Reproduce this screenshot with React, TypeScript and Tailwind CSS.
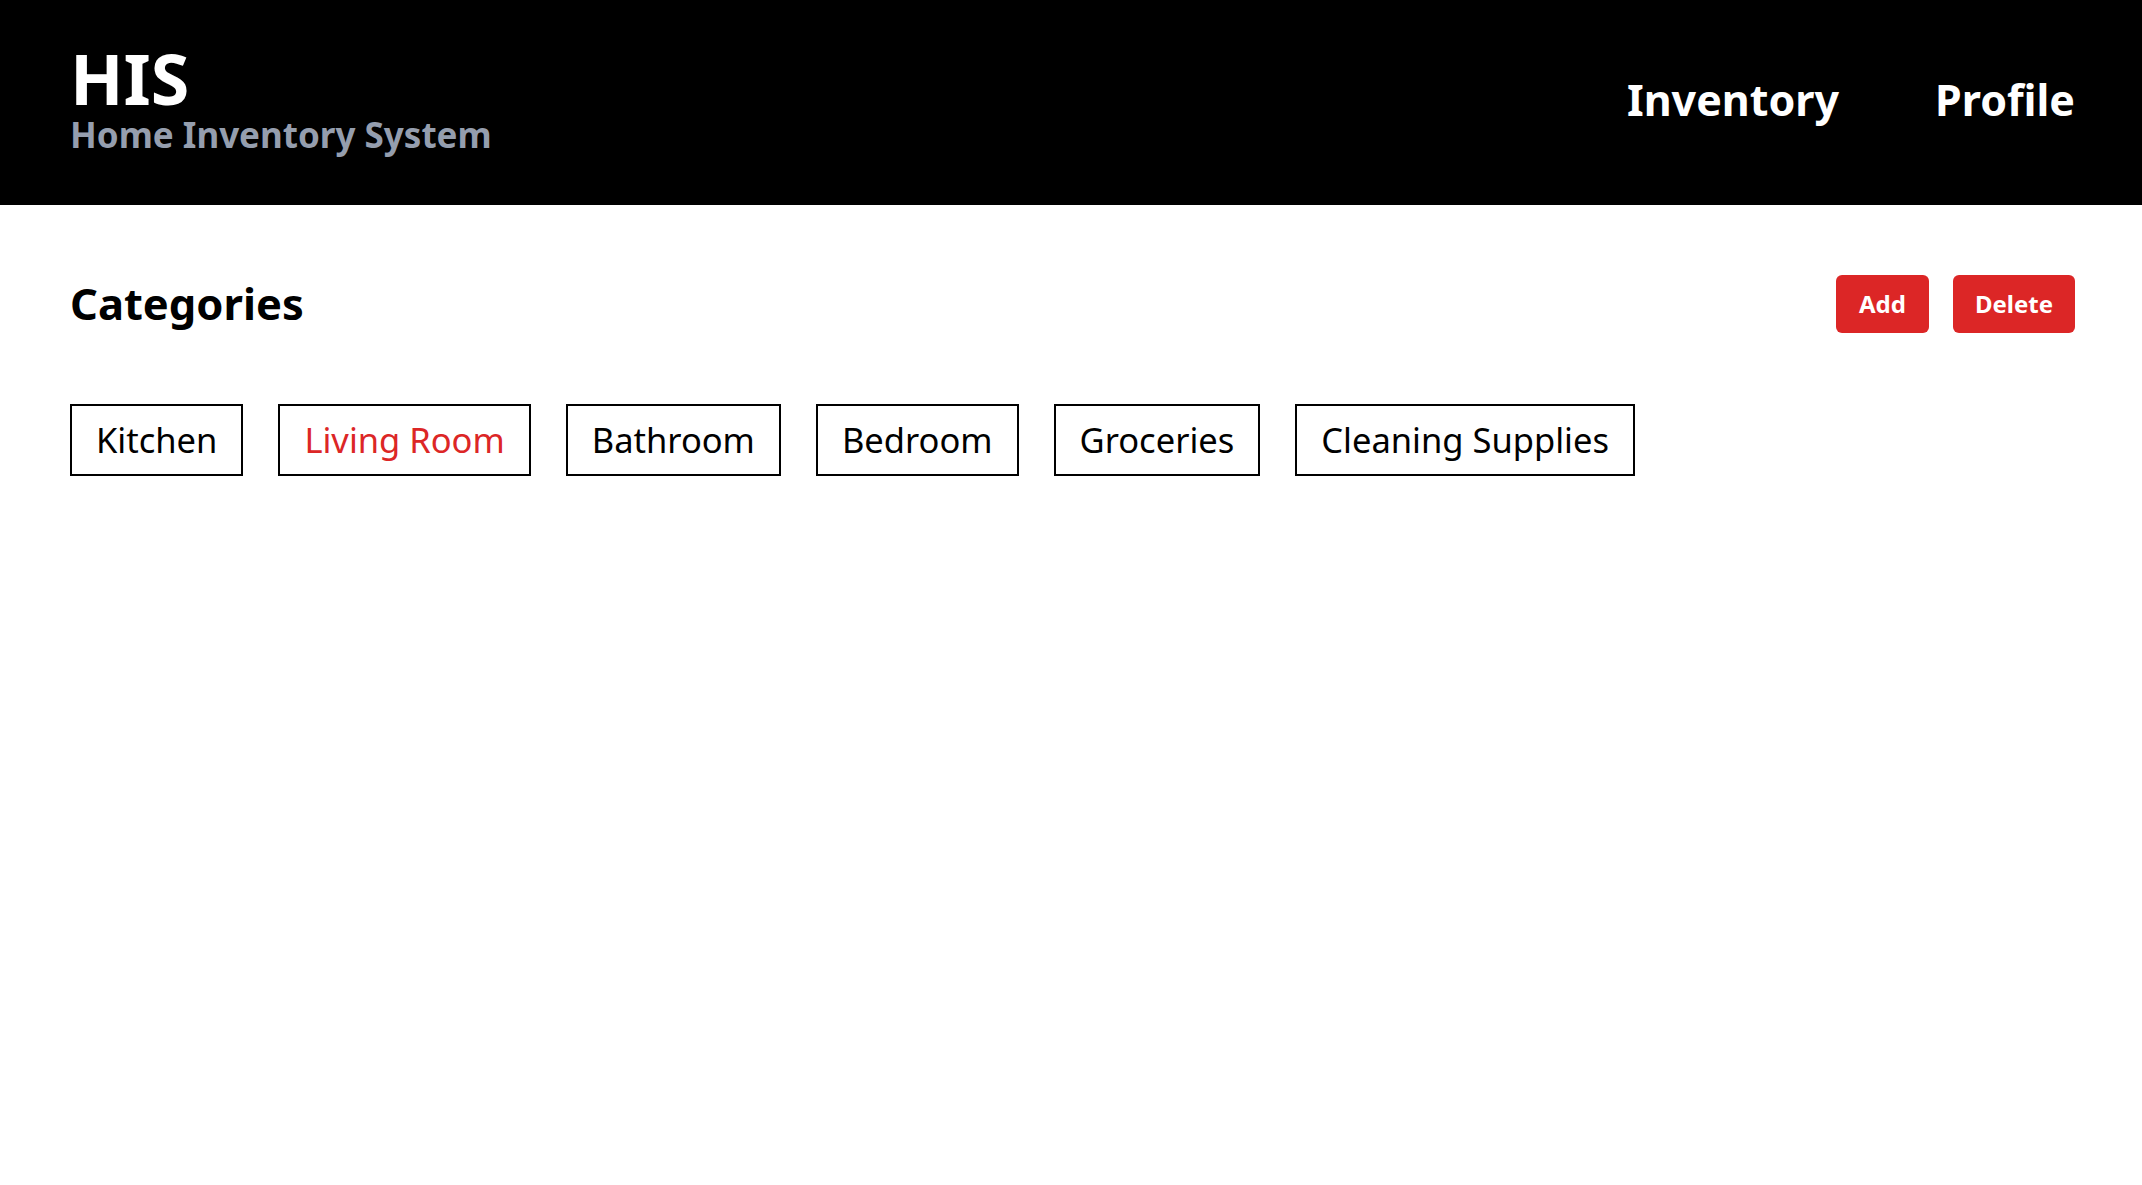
import React from "react";

const categories = [
  { name: "Kitchen", active: false },
  { name: "Living Room", active: true },
  { name: "Bathroom", active: false },
  { name: "Bedroom", active: false },
  { name: "Groceries", active: false },
  { name: "Cleaning Supplies", active: false },
];

export default function App() {
  return (
    <div className="min-h-screen bg-white font-['Noto_Sans',sans-serif] text-black">
      <header className="flex h-[205px] items-center justify-between bg-black pl-[70px] pr-[67px]">
        <div className="flex flex-col pb-[10px]">
          <span className="text-[70px] font-bold leading-none text-white">HIS</span>
          <span className="mt-[4px] text-[35px] font-bold leading-none text-[#959eae]">
            Home Inventory System
          </span>
        </div>
        <nav className="flex items-center gap-[96px] pb-[6px]">
          <a className="text-[43px] font-bold leading-none text-white">Inventory</a>
          <a className="text-[43px] font-bold leading-none text-white">Profile</a>
        </nav>
      </header>
      <main className="pl-[70px] pr-[67px] pt-[70px]">
        <div className="flex items-center justify-between">
          <h1 className="text-[43.5px] font-bold leading-none">Categories</h1>
          <div className="flex gap-[24px]">
            <button className="rounded-md bg-[#dc2626] px-[23px] py-[13px] text-[24px] font-bold leading-[32px] text-white">
              Add
            </button>
            <button className="rounded-md bg-[#dc2626] px-[22px] py-[13px] text-[24px] font-bold leading-[32px] text-white">
              Delete
            </button>
          </div>
        </div>
        <div className="mt-[71px] flex flex-wrap gap-[35px]">
          {categories.map((c) => (
            <button
              key={c.name}
              className={`border-2 border-black px-[24px] py-[8px] text-[34.5px] leading-[52px] ${
                c.active ? "text-[#dc2626]" : "text-black"
              }`}
            >
              {c.name}
            </button>
          ))}
        </div>
      </main>
    </div>
  );
}
